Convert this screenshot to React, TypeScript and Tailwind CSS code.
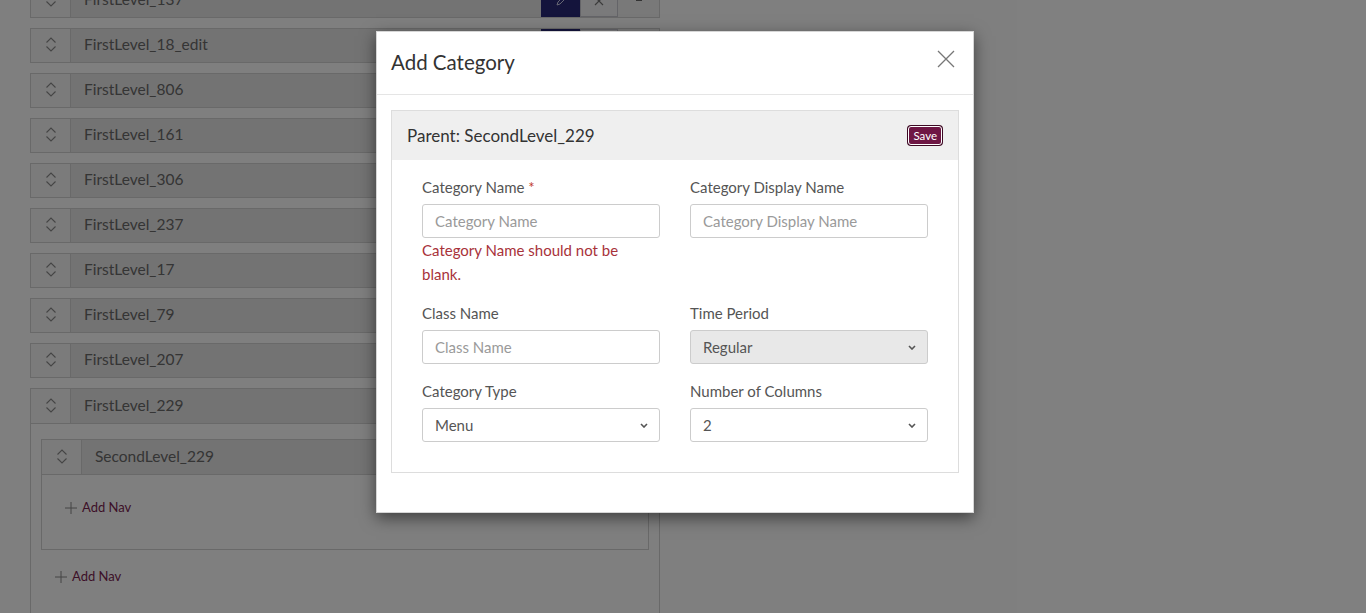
import React from "react";

const HandleIcon = () => (
  <svg width="12" height="17" viewBox="0 0 12 17" fill="none" stroke="#8a8a8a" strokeWidth="1.1">
    <path d="M1.5 6.5 L6 2 L10.5 6.5" />
    <path d="M1.5 10.5 L6 15 L10.5 10.5" />
  </svg>
);

const Row = ({ name, bordered = true }: { name: string; bordered?: boolean }) => (
  <div className={`flex h-[35px] ${bordered ? "border border-[#d2d2d2]" : "border-b border-[#d2d2d2]"}`}>
    <div className="w-[40px] shrink-0 bg-[#f7f7f7] border-r border-[#d2d2d2] flex items-center justify-center pb-[2px]">
      <HandleIcon />
    </div>
    <div className="flex-1 bg-[#e6e6e6] flex items-center pl-[13px] pb-[1px] text-[15.5px] text-[#6a6a6a]">{name}</div>
    <div className="w-[39px] bg-[#282878] flex items-center justify-center">
      <svg width="12" height="12" viewBox="0 0 12 12" fill="none" stroke="#cfcfe8" strokeWidth="1">
        <path d="M2 10 L3 7 L9 1 L11 3 L5 9 Z" />
      </svg>
    </div>
    <div className="w-[38px] bg-[#f4f4f6] border border-[#c8c8d0] flex items-center justify-center">
      <svg width="10" height="10" viewBox="0 0 10 10" stroke="#777" strokeWidth="1.2">
        <path d="M1 1 L9 9 M9 1 L1 9" />
      </svg>
    </div>
    <div className="w-[41px] bg-[#f2f2f2] flex items-center justify-center">
      <div className="w-[6px] h-[1px] bg-[#666]" />
    </div>
  </div>
);

const AddNav = () => (
  <div className="flex items-center gap-[5px] text-[13px] text-[#7a2350]">
    <svg width="12" height="12" viewBox="0 0 12 12" stroke="#888" strokeWidth="1">
      <path d="M6 0 V12 M0 6 H12" />
    </svg>
    <span>Add Nav</span>
  </div>
);

const Chevron = () => (
  <svg width="8" height="5" viewBox="0 0 8 5" fill="none" stroke="#555" strokeWidth="1.6">
    <path d="M1 1 L4 4 L7 1" />
  </svg>
);

const Select = ({ value, disabled = false }: { value: string; disabled?: boolean }) => (
  <div
    className={`h-[34px] rounded-[3px] border border-[#cccccc] flex items-center justify-between pl-[12px] pr-[11px] text-[15px] text-[#555] ${
      disabled ? "bg-[#e8e8e8]" : "bg-white"
    }`}
  >
    <span>{value}</span>
    <Chevron />
  </div>
);

const Input = ({ placeholder }: { placeholder: string }) => (
  <input
    placeholder={placeholder}
    className="block w-full h-[34px] rounded-[3px] border border-[#cccccc] bg-white pl-[12px] text-[15px] text-[#555] placeholder:text-[#9a9a9a] outline-none"
  />
);

const Label = ({ children }: { children: React.ReactNode }) => (
  <div className="text-[15px] leading-[21px] text-[#555] mb-[6px]">{children}</div>
);

export default function App() {
  const rows = [
    "FirstLevel_137",
    "FirstLevel_18_edit",
    "FirstLevel_806",
    "FirstLevel_161",
    "FirstLevel_306",
    "FirstLevel_237",
    "FirstLevel_17",
    "FirstLevel_79",
    "FirstLevel_207",
  ];
  return (
    <div className="relative w-[1366px] h-[613px] overflow-hidden bg-white font-[Lato,sans-serif]">
      {/* underlying page */}
      <div className="ml-[30px] w-[630px] mt-[-17px] flex flex-col gap-[10px]">
        {rows.map((r) => (
          <Row key={r} name={r} />
        ))}
        <div className="border border-[#d2d2d2] h-[400px]">
          <Row name="FirstLevel_229" bordered={false} />
          <div className="pt-[15px] px-[10px]">
            <div className="border border-[#d2d2d2]">
              <Row name="SecondLevel_229" bordered={false} />
              <div className="h-[74px] pl-[23px] pt-[23px]">
                <AddNav />
              </div>
            </div>
            <div className="pl-[14px] pt-[17px]">
              <AddNav />
            </div>
          </div>
        </div>
      </div>

      {/* overlay */}
      <div className="absolute inset-0 bg-black/50" />

      {/* modal */}
      <div className="absolute left-[376px] top-[31px] w-[598px] bg-white border border-[#999]/40 shadow-[0_5px_15px_rgba(0,0,0,0.5)]">
        <div className="h-[63px] border-b border-[#e5e5e5] flex items-center justify-between pl-[14px] pr-[18px]">
          <div className="text-[20.5px] text-[#333] pb-[1px]">Add Category</div>
          <svg width="18" height="18" viewBox="0 0 18 18" stroke="#777" strokeWidth="1.3" className="mt-[-9px]">
            <path d="M1 1 L17 17 M17 1 L1 17" />
          </svg>
        </div>
        <div className="px-[14px] pt-[15px] pb-[39px]">
          <div className="border border-[#dddddd]">
            <div className="h-[49px] bg-[#efefef] flex items-center justify-between pl-[15px] pr-[16px]">
              <div className="text-[17px] text-[#333]">Parent: SecondLevel_229</div>
              <div className="h-[19px] px-[4px] flex items-center rounded-[3px] bg-[#6e1744] border border-white ring-1 ring-[#3d0a24] text-[11.5px] text-white leading-none">
                Save
              </div>
            </div>
            <div className="px-[30px] pt-[17px] pb-[30px] grid grid-cols-2 gap-x-[30px] gap-y-[17px]">
              <div>
                <Label>
                  Category Name <span className="text-[#c0392b]">*</span>
                </Label>
                <Input placeholder="Category Name" />
                <div className="text-[15px] leading-[24px] text-[#a8323a] pr-[30px]">
                  Category Name should not be blank.
                </div>
              </div>
              <div>
                <Label>Category Display Name</Label>
                <Input placeholder="Category Display Name" />
              </div>
              <div>
                <Label>Class Name</Label>
                <Input placeholder="Class Name" />
              </div>
              <div>
                <Label>Time Period</Label>
                <Select value="Regular" disabled />
              </div>
              <div>
                <Label>Category Type</Label>
                <Select value="Menu" />
              </div>
              <div>
                <Label>Number of Columns</Label>
                <Select value="2" />
              </div>
            </div>
          </div>
        </div>
      </div>
    </div>
  );
}
